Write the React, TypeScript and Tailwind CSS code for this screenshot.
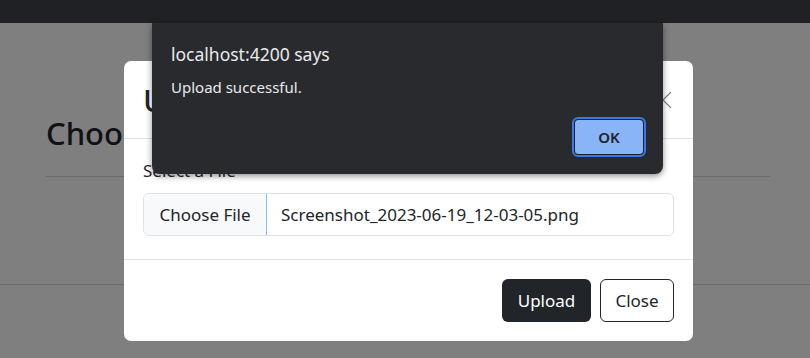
const font = { fontFamily: '"Noto Sans", "Liberation Sans", sans-serif' }

function PageBehind() {
  return (
    <div className="flex-1 flex flex-col bg-white text-[#212529]">
      <div className="pl-[46px] pr-[40px] pt-[90px]">
        <h2 className="text-[31px] leading-[40px] font-medium">Choose a File</h2>
        <div className="mt-[23px] border-t border-[#d6d6d6]" />
      </div>
      <div className="mt-[107px] border-t border-[#d6d6d6]" />
    </div>
  )
}

function UploadModal() {
  return (
    <div className="absolute left-[124px] top-[61px] w-[569px] h-[280px] bg-white rounded-[7px] flex flex-col text-[#212529]">
      <div className="h-[78px] px-[19px] flex items-center justify-between border-b border-[#dee2e6]">
        <h1 className="text-[31px] leading-[40px] font-medium">Upload File</h1>
        <button className="w-6 h-6 flex items-center justify-center mr-[-1px]">
          <svg width="18" height="18" viewBox="0 0 16 16" fill="none" stroke="#7c7c7c" strokeWidth="1.2">
            <path d="M1 1 15 15M15 1 1 15" />
          </svg>
        </button>
      </div>
      <div className="px-[19px] pt-[20px] pb-[23px] flex flex-col border-b border-[#dee2e6]">
        <label className="text-[17px] leading-[24px] mb-[10px]">Select a File</label>
        <div className="h-[43px] flex items-stretch border border-[#dee2e6] rounded-[6px] overflow-hidden text-[17px]">
          <div className="w-[123px] bg-[#f8f9fa] flex items-center justify-center border-r border-[#8bb8f5]">
            Choose File
          </div>
          <div className="flex items-center pl-[14px]">Screenshot_2023-06-19_12-03-05.png</div>
        </div>
      </div>
      <div className="flex-1 flex items-center justify-end gap-[9px] px-[19px]">
        <button className="w-[89px] h-[43px] rounded-[6px] bg-[#212529] text-white text-[17px]">Upload</button>
        <button className="w-[74px] h-[43px] rounded-[6px] border border-[#212529] bg-white text-[17px]">Close</button>
      </div>
    </div>
  )
}

function AlertDialog() {
  return (
    <div className="absolute left-[152px] top-[23px] w-[511px] h-[151px] bg-[#292a2d] rounded-b-[8px] shadow-[0_2px_6px_rgba(0,0,0,0.45)] px-[19px] pt-[19px] flex flex-col">
      <div className="text-[17.5px] leading-[24px] text-[#e8eaed]">localhost:4200 says</div>
      <div className="mt-[11px] text-[15px] leading-[20px] text-[#e8eaed]">Upload successful.</div>
      <div className="flex justify-end mt-[20px]">
        <button className="w-[74px] h-[40px] rounded-[6px] border-2 border-[#3b78e7] p-0 mr-[-2px]">
          <div className="w-full h-full rounded-[4px] border border-[#202124] bg-[#8ab4f8] flex items-center justify-center text-[15px] font-semibold text-[#202124]">
            OK
          </div>
        </button>
      </div>
    </div>
  )
}

export default function App() {
  return (
    <div className="relative w-[810px] h-[358px] overflow-hidden flex flex-col" style={font}>
      <div className="h-[23px] bg-[#202124] shrink-0" />
      <div className="relative flex-1 flex flex-col">
        <PageBehind />
        <div className="absolute inset-0 bg-black/50" />
      </div>
      <UploadModal />
      <AlertDialog />
    </div>
  )
}
